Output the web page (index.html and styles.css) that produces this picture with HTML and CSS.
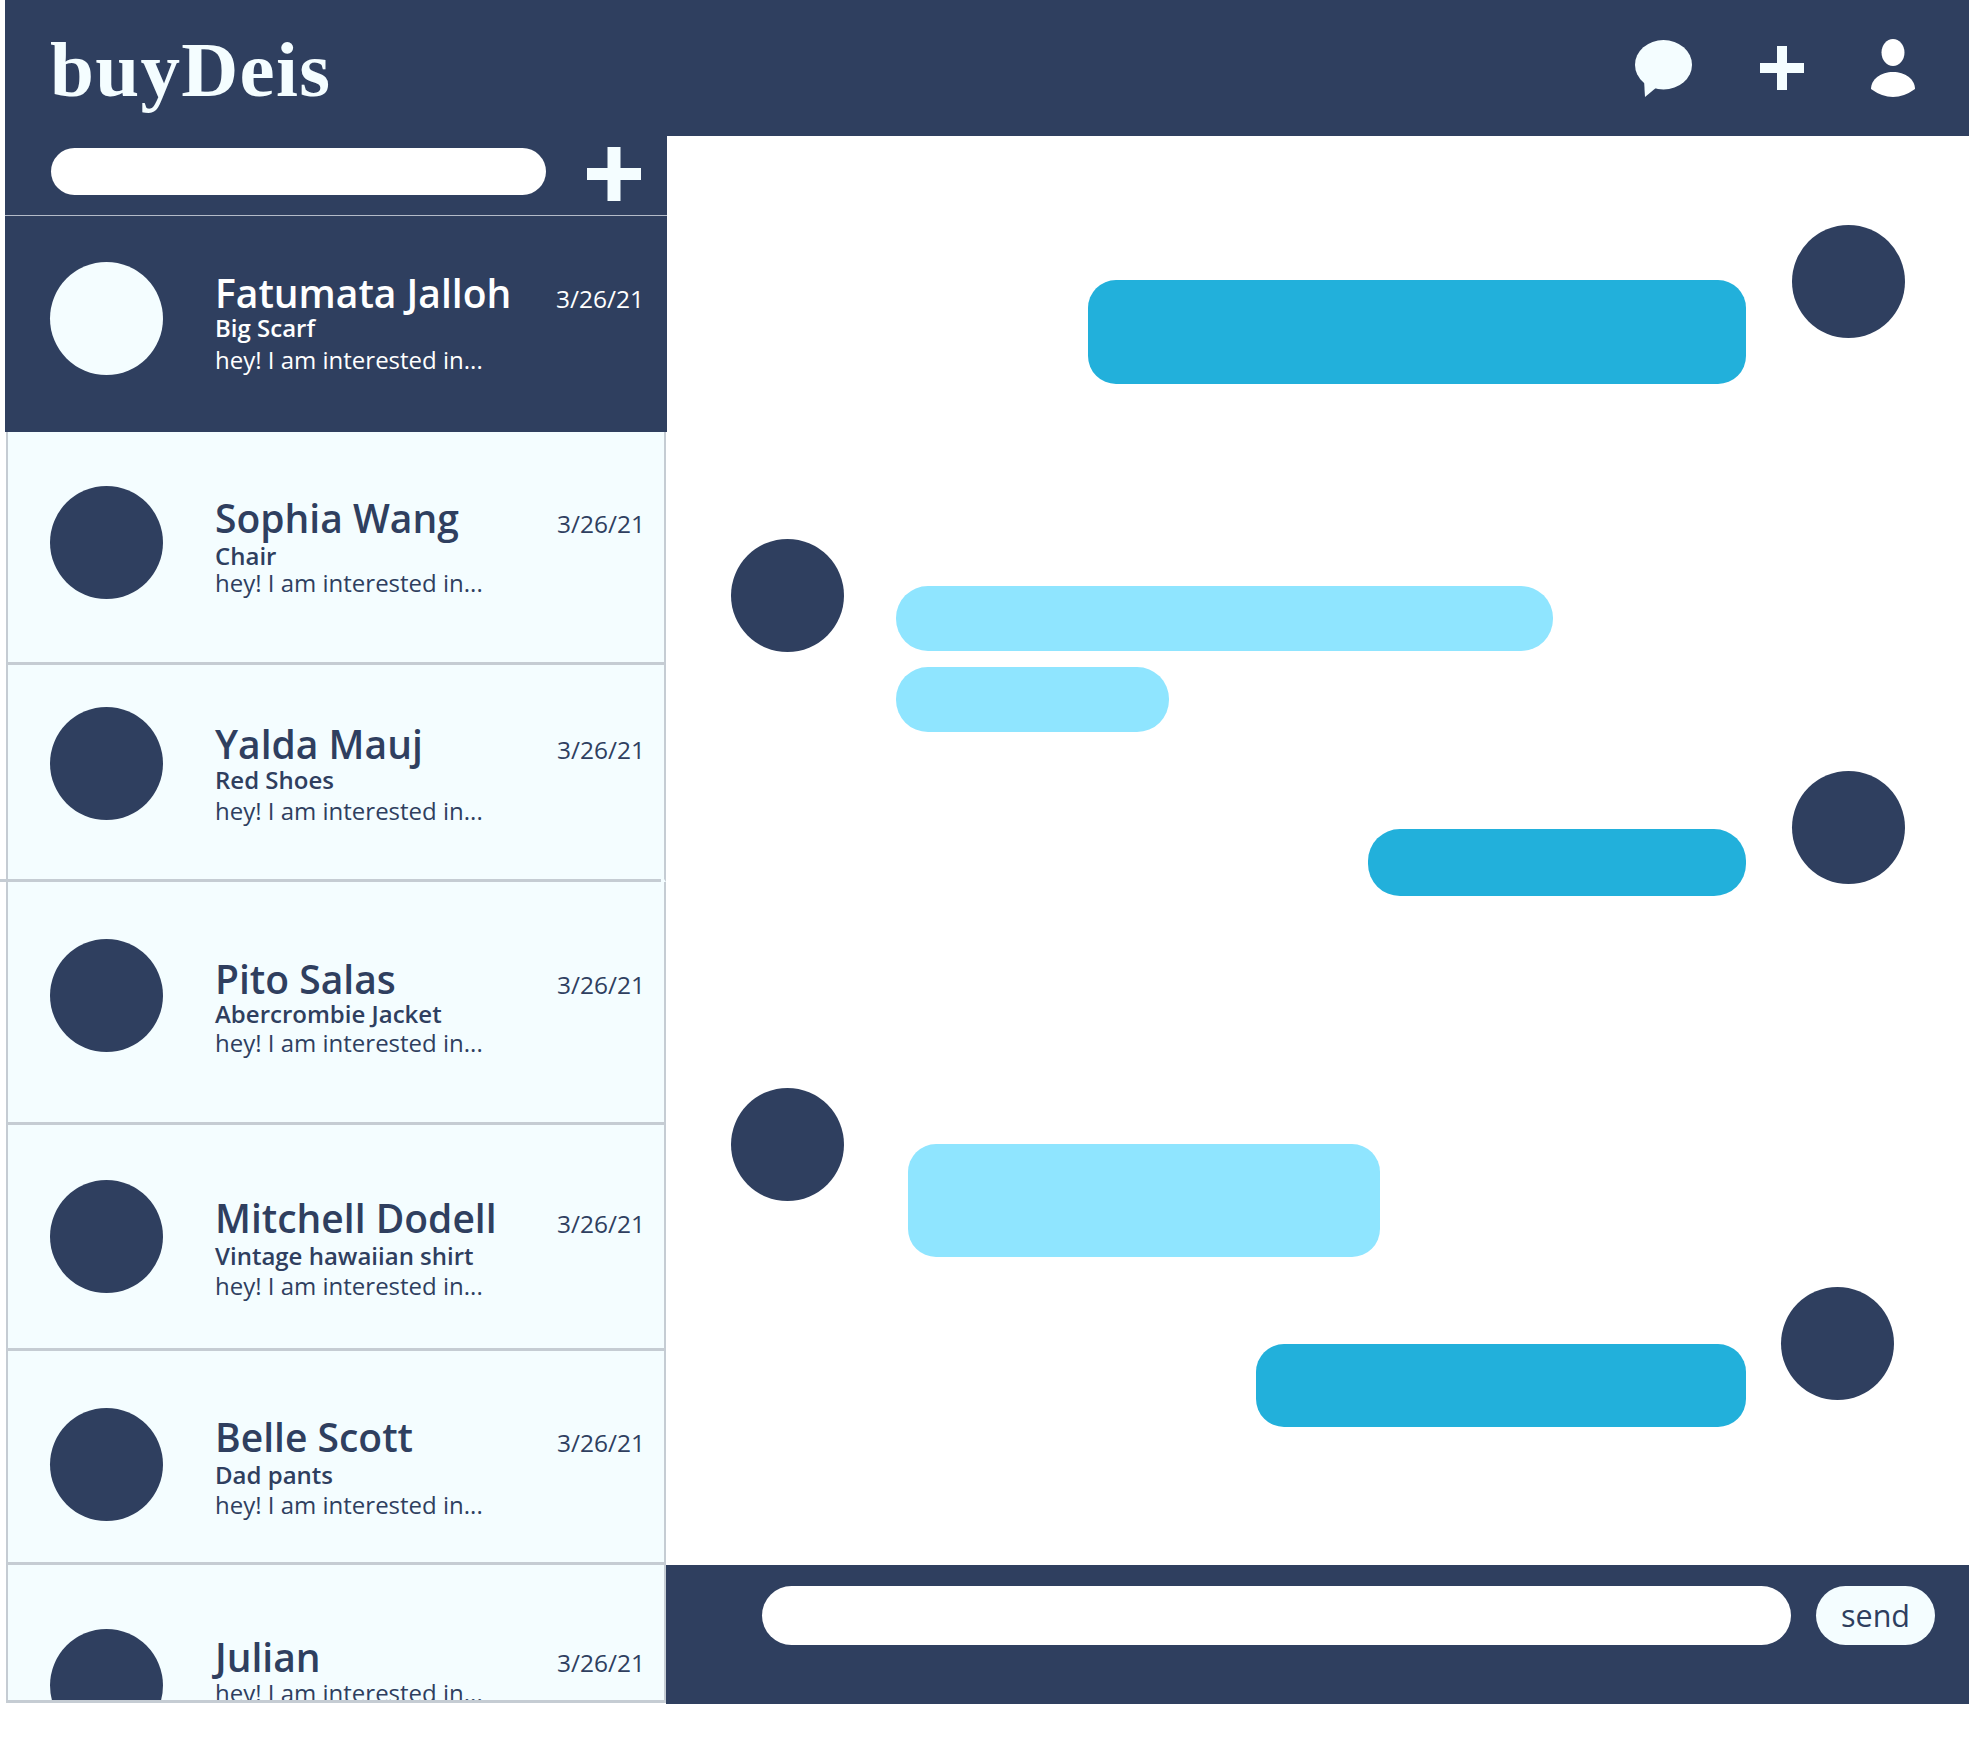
FILE: index.html
```html
<!DOCTYPE html>
<html lang="en">
  <head>
    <meta charset="UTF-8" />
    <meta name="viewport" content="width=device-width, initial-scale=1.0" />
    <title>buyDeis</title>
    <link rel="stylesheet" href="styles.css">
  </head>
  <body>
    <div class="page">
      <header class="topbar">
        <div class="logo">buyDeis</div>
        <nav class="topbar-icons">
          <svg class="icon-chat" viewBox="0 0 57 57"><ellipse cx="28.5" cy="24.7" rx="28.5" ry="24.7" /><path d="M9 40 L10 57 L22 47 Z" /></svg>
          <svg class="icon-plus" viewBox="0 0 44 44"><path d="M17 0 H27 V17 H44 V27 H27 V44 H17 V27 H0 V17 H17 Z" /></svg>
          <svg class="icon-user" viewBox="0 0 44 58"><ellipse cx="22" cy="13.5" rx="11.5" ry="13.5" /><path d="M0 50 C0 40 10 33 22 33 C34 33 44 40 44 50 Q33 58 22 58 Q11 58 0 50 Z" /></svg>
        </nav>
      </header>

      <div class="content">
        <aside class="sidebar">
          <div class="search-row">
            <div class="search"></div>
            <svg class="search-plus" viewBox="0 0 54 54"><path d="M20.5 0 H33.5 V21 H54 V33 H33.5 V54 H20.5 V33 H0 V21 H20.5 Z" /></svg>
          </div>

          <ul class="threads">
            <li class="thread active">
              <div class="avatar"></div>
              <div class="info">
                <div class="info-top"><span class="name">Fatumata Jalloh</span><span class="date">3/26/21</span></div>
                <div class="item">Big Scarf</div>
                <div class="preview">hey! I am interested in...</div>
              </div>
            </li>
            <li class="thread">
              <div class="avatar"></div>
              <div class="info">
                <div class="info-top"><span class="name">Sophia Wang</span><span class="date">3/26/21</span></div>
                <div class="item">Chair</div>
                <div class="preview">hey! I am interested in...</div>
              </div>
            </li>
            <li class="thread">
              <div class="avatar"></div>
              <div class="info">
                <div class="info-top"><span class="name">Yalda Mauj</span><span class="date">3/26/21</span></div>
                <div class="item">Red Shoes</div>
                <div class="preview">hey! I am interested in...</div>
              </div>
            </li>
            <li class="thread">
              <div class="avatar"></div>
              <div class="info">
                <div class="info-top"><span class="name">Pito Salas</span><span class="date">3/26/21</span></div>
                <div class="item">Abercrombie Jacket</div>
                <div class="preview">hey! I am interested in...</div>
              </div>
            </li>
            <li class="thread">
              <div class="avatar"></div>
              <div class="info">
                <div class="info-top"><span class="name">Mitchell Dodell</span><span class="date">3/26/21</span></div>
                <div class="item">Vintage hawaiian shirt</div>
                <div class="preview">hey! I am interested in...</div>
              </div>
            </li>
            <li class="thread">
              <div class="avatar"></div>
              <div class="info">
                <div class="info-top"><span class="name">Belle Scott</span><span class="date">3/26/21</span></div>
                <div class="item">Dad pants</div>
                <div class="preview">hey! I am interested in...</div>
              </div>
            </li>
            <li class="thread">
              <div class="avatar"></div>
              <div class="info">
                <div class="info-top"><span class="name">Julian</span><span class="date">3/26/21</span></div>
                <div class="preview">hey! I am interested in...</div>
              </div>
            </li>
          </ul>
        </aside>

        <main class="chat">
          <div class="messages">
            <div class="msg mine msg-1">
              <div class="bubbles"><div class="bubble b-1"></div></div>
              <div class="avatar"></div>
            </div>
            <div class="msg theirs msg-2">
              <div class="avatar"></div>
              <div class="bubbles"><div class="bubble b-2"></div><div class="bubble b-3"></div></div>
            </div>
            <div class="msg mine msg-3">
              <div class="bubbles"><div class="bubble b-4"></div></div>
              <div class="avatar"></div>
            </div>
            <div class="msg theirs msg-4">
              <div class="avatar"></div>
              <div class="bubbles"><div class="bubble b-5"></div></div>
            </div>
            <div class="msg mine msg-5">
              <div class="bubbles"><div class="bubble b-6"></div></div>
              <div class="avatar"></div>
            </div>
          </div>

          <div class="composer">
            <div class="composer-input"></div>
            <button class="send">send</button>
          </div>
        </main>
      </div>
    </div>
  </body>
</html>
```

FILE: styles.css
```css
body {
  font-family: 'Open Sans', sans-serif;
  margin: 0;
  background: #fff;
}

.page {
  width: 1964px;
  height: 1704px;
  margin-left: 5px;
  display: flex;
  flex-direction: column;
}

.topbar {
  height: 136px;
  flex: none;
  background: #2f3f5f;
  display: flex;
  align-items: center;
  justify-content: space-between;
  padding: 0 54px 0 45px;
  box-sizing: border-box;
}

.logo {
  font-family: 'Liberation Serif', serif;
  font-weight: bold;
  font-size: 79px;
  letter-spacing: 1.3px;
  color: #f4fdff;
  margin-top: 3px;
}

.topbar-icons {
  display: flex;
  align-items: center;
  gap: 68px;
}

.topbar-icons svg,
.search-plus {
  display: block;
  fill: #f4fdff;
}

.icon-chat {
  width: 57px;
  height: 57px;
}

.icon-plus {
  width: 44px;
  height: 44px;
}

.topbar-icons .icon-user {
  width: 44px;
  height: 58px;
  margin-left: -1px;
  fill: #fff;
}

.content {
  flex: 1;
  display: flex;
  min-height: 0;
}

/* left column */
.sidebar {
  width: 662px;
  flex: none;
  display: flex;
  flex-direction: column;
}

.search-row {
  height: 80px;
  flex: none;
  box-sizing: border-box;
  background: #2f3f5f;
  border-bottom: 1px solid #b4bbc8;
  display: flex;
  align-items: flex-start;
  padding: 12px 26px 0 46px;
  justify-content: space-between;
}

.search {
  width: 495px;
  height: 47px;
  border-radius: 24px;
  background: #fff;
}

.search-plus {
  width: 54px;
  height: 54px;
  margin-top: -1px;
}

.threads {
  list-style: none;
  margin: 0;
  padding: 0;
  flex: 1;
  min-height: 0;
}

.thread {
  --row: 217px;
  --top: 46px;
  --text: 56px;
  --item-gap: 0px;
  --preview-gap: 0px;
  height: var(--row);
  margin: 0 1px 0 1px;
  box-sizing: border-box;
  display: flex;
  align-items: flex-start;
  background: #f4fdff;
  color: #2f3f5f;
  border-left: 2px solid #c5ccd3;
  border-right: 2px solid #c5ccd3;
  border-bottom: 3px solid #c5ccd3;
  padding-left: 42px;
}

.thread.active {
  --row: 216px;
  --text: 55px;
  --item-gap: -2px;
  --preview-gap: 2px;
  background: #2f3f5f;
  color: #fff;
  border: none;
  margin: 0;
  padding-left: 45px;
}

.thread.active .info {
  padding-right: 23px;
}

.thread:nth-child(2) { --row: 233px; --top: 54px; --text: 64px; --item-gap: 1px; --preview-gap: -3px; }
.thread:nth-child(3) { --row: 217px; --top: 42px; --text: 57px; --item-gap: -1px; --preview-gap: 1px; }
.thread:nth-child(4) { --row: 243px; --top: 57px; --text: 75px; --item-gap: -2px; --preview-gap: -1px; }
.thread:nth-child(5) { --row: 226px; --top: 55px; --text: 71px; --item-gap: 1px; }
.thread:nth-child(6) { --row: 214px; --top: 57px; --text: 64px; --item-gap: 1px; }
.thread:nth-child(7) { --row: 138px; --top: 64px; --text: 70px; --preview-gap: -1px; overflow: hidden; }

/* this divider overshoots the column on the left in the mockup */
.thread:nth-child(3) {
  position: relative;
  border-bottom-color: transparent;
}

.thread:nth-child(3)::after {
  content: '';
  position: absolute;
  left: -8px;
  right: 3px;
  bottom: -3px;
  height: 3px;
  background: #c5ccd3;
}

.avatar {
  width: 113px;
  height: 113px;
  flex: none;
  border-radius: 50%;
  background: #2f3f5f;
}

.thread .avatar {
  margin-top: var(--top);
  margin-right: 52px;
}

.thread.active .avatar {
  background: #f4fdff;
}

.info {
  flex: 1;
  min-width: 0;
  margin-top: var(--text);
  padding-right: 19px;
}

.info-top {
  display: flex;
  justify-content: space-between;
  align-items: baseline;
  height: 44px;
}

.name {
  font-size: 39px;
  line-height: 44px;
  font-weight: 600;
  white-space: nowrap;
}

.date {
  font-size: 24.5px;
  font-weight: 500;
}

.item {
  font-size: 24px;
  line-height: 30px;
  font-weight: 600;
  margin-top: var(--item-gap);
}

.preview {
  font-size: 24px;
  line-height: 30px;
  margin-top: var(--preview-gap);
}

/* right column */
.chat {
  flex: 1;
  min-width: 0;
  display: flex;
  flex-direction: column;
}

.messages {
  flex: 1;
  min-height: 0;
}

.msg {
  display: flex;
  align-items: flex-start;
}

.mine {
  justify-content: flex-end;
  padding-right: 64px;
}

.theirs {
  padding-left: 64px;
}

.mine .bubbles {
  margin-right: 46px;
}

.theirs .bubbles {
  margin-left: 52px;
}

.msg-1 { margin-top: 89px; }
.msg-2 { margin-top: 155px; }
.msg-3 { margin-top: 39px; }
.msg-4 { margin-top: 192px; }
.msg-5 { margin-top: 30px; padding-right: 75px; }

.msg-1 .bubbles { margin-top: 55px; }
.msg-2 .bubbles { margin-top: 47px; }
.msg-3 .bubbles { margin-top: 58px; }
.msg-4 .bubbles { margin-top: 56px; margin-left: 64px; }
.msg-5 .bubbles { margin-top: 57px; margin-right: 35px; }

.bubble {
  background: #8fe5ff;
}

.mine .bubble {
  background: #22b0db;
}

.b-1 { width: 658px; height: 104px; border-radius: 28px; }
.b-2 { width: 657px; height: 65px; border-radius: 32px; }
.b-3 { width: 273px; height: 65px; border-radius: 32px; margin-top: 16px; }
.b-4 { width: 378px; height: 67px; border-radius: 32px; }
.b-5 { width: 472px; height: 113px; border-radius: 28px; }
.b-6 { width: 490px; height: 83px; border-radius: 28px; }

.composer {
  height: 139px;
  flex: none;
  box-sizing: border-box;
  margin-left: -1px;
  background: #2f3f5f;
  display: flex;
  align-items: flex-start;
  gap: 25px;
  padding: 21px 0 0 96px;
}

.composer-input {
  width: 1029px;
  height: 59px;
  border-radius: 30px;
  background: #fff;
}

.send {
  width: 119px;
  height: 59px;
  border: none;
  padding: 0 0 2px;
  border-radius: 30px;
  background: #f4fdff;
  color: #2f3f5f;
  font-family: 'Open Sans', sans-serif;
  font-size: 30.5px;
}
```
